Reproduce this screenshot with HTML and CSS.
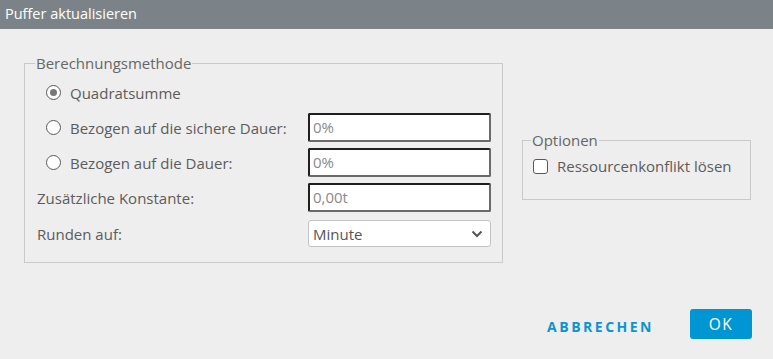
FILE: index.html
```html
<!DOCTYPE html>
<html lang="de">
<head>
    <meta charset="UTF-8">
    <title>Puffer aktualisieren</title>
    <link rel="stylesheet" href="styles.css">
</head>
<body>
    <div class="dialog">
        <div class="dialog-header">Puffer aktualisieren</div>
        <div class="dialog-body">
            <fieldset class="group group-method">
                <legend>Berechnungsmethode</legend>
                <div class="row">
                    <label class="radio-label">
                        <span class="radio checked"></span>
                        Quadratsumme
                    </label>
                </div>
                <div class="row">
                    <label class="radio-label">
                        <span class="radio"></span>
                        Bezogen auf die sichere Dauer:
                    </label>
                    <div class="text-input">0%</div>
                </div>
                <div class="row">
                    <label class="radio-label">
                        <span class="radio"></span>
                        Bezogen auf die Dauer:
                    </label>
                    <div class="text-input">0%</div>
                </div>
                <div class="row">
                    <label class="plain-label">Zusätzliche Konstante:</label>
                    <div class="text-input">0,00t</div>
                </div>
                <div class="row row-select">
                    <label class="plain-label">Runden auf:</label>
                    <div class="select">
                        <span>Minute</span>
                        <svg width="12" height="8" viewBox="0 0 12 8">
                            <path d="M1.5 1.5 L6 6 L10.5 1.5" fill="none" stroke="#555" stroke-width="2"/>
                        </svg>
                    </div>
                </div>
            </fieldset>

            <fieldset class="group group-options">
                <legend>Optionen</legend>
                <label class="check-label">
                    <span class="checkbox"></span>
                    Ressourcenkonflikt lösen
                </label>
            </fieldset>
        </div>
        <div class="dialog-footer">
            <button class="btn btn-link">ABBRECHEN</button>
            <button class="btn btn-primary">OK</button>
        </div>
    </div>
</body>
</html>
```

FILE: styles.css
```css
body {
    margin: 0;
    font-family: "Open Sans", Arial, sans-serif;
    font-size: 15px;
    color: #5c5c5c;
    background-color: #eeeeee;
}

.dialog-header {
    height: 29px;
    line-height: 28px;
    padding-left: 5px;
    background-color: #7c8388;
    color: white;
    font-size: 14.5px;
}

.dialog-body {
    display: flex;
    align-items: flex-start;
    padding: 26px 0 0 24px;
}

.group {
    margin: 0;
    border: 1px solid #c9c9c9;
    box-sizing: border-box;
}

.group legend {
    padding: 0 1px;
    margin-left: -2px;
    line-height: 17px;
    color: #666;
}

.group-method {
    width: 479px;
    padding: 6px 11px 15px 12px;
}

.group-options {
    width: 229px;
    margin-left: 19px;
    margin-top: 77px;
    height: 68px;
    padding: 4px 10px 0 10px;
}

.row {
    display: flex;
    align-items: center;
    justify-content: space-between;
    height: 29px;
    margin-bottom: 6px;
}

.row:first-child {
    margin-bottom: 8px;
}

.row-select {
    height: 27px;
    margin-top: 8px;
    margin-bottom: 0;
}

.radio-label {
    display: flex;
    align-items: center;
    padding-left: 9px;
}

.radio {
    width: 15px;
    height: 15px;
    box-sizing: border-box;
    border: 1.5px solid #5a5a5a;
    border-radius: 50%;
    background-color: white;
    margin-right: 9px;
    position: relative;
}

.radio.checked::after {
    content: "";
    position: absolute;
    left: 2.5px;
    top: 2.5px;
    width: 7px;
    height: 7px;
    border-radius: 50%;
    background-color: #777;
}

.text-input {
    width: 183px;
    height: 29px;
    box-sizing: border-box;
    border: 2px solid;
    border-color: #1f1f1f #6a6a6a #6a6a6a #1f1f1f;
    border-radius: 2px;
    background-color: white;
    padding-left: 3px;
    line-height: 25px;
    color: #8a8a8a;
}

.select {
    width: 183px;
    height: 27px;
    box-sizing: border-box;
    border: 1px solid #c4c4c4;
    border-radius: 3px;
    background-color: white;
    display: flex;
    align-items: center;
    justify-content: space-between;
    padding: 0 7px 0 4px;
    color: #555;
}

.check-label {
    display: flex;
    align-items: center;
    margin-top: 3px;
}

.checkbox {
    width: 15px;
    height: 15px;
    box-sizing: border-box;
    border: 1.5px solid #5a5a5a;
    border-radius: 3px;
    background-color: white;
    margin-right: 9px;
}

.dialog-footer {
    display: flex;
    justify-content: flex-end;
    align-items: center;
    margin-top: 46px;
    padding-right: 21px;
}

.btn {
    font-family: "Open Sans", Arial, sans-serif;
    border: none;
    cursor: pointer;
    letter-spacing: 1px;
}

.btn-link {
    background: none;
    color: #0a94d0;
    font-weight: bold;
    font-size: 14px;
    letter-spacing: 2.5px;
    margin-right: 36px;
    padding: 0;
    margin-top: 4px;
}

.btn-primary {
    width: 62px;
    height: 30px;
    background-color: #0095d3;
    color: white;
    border-radius: 3px;
    font-size: 15.5px;
    letter-spacing: 1.5px;
}
```
